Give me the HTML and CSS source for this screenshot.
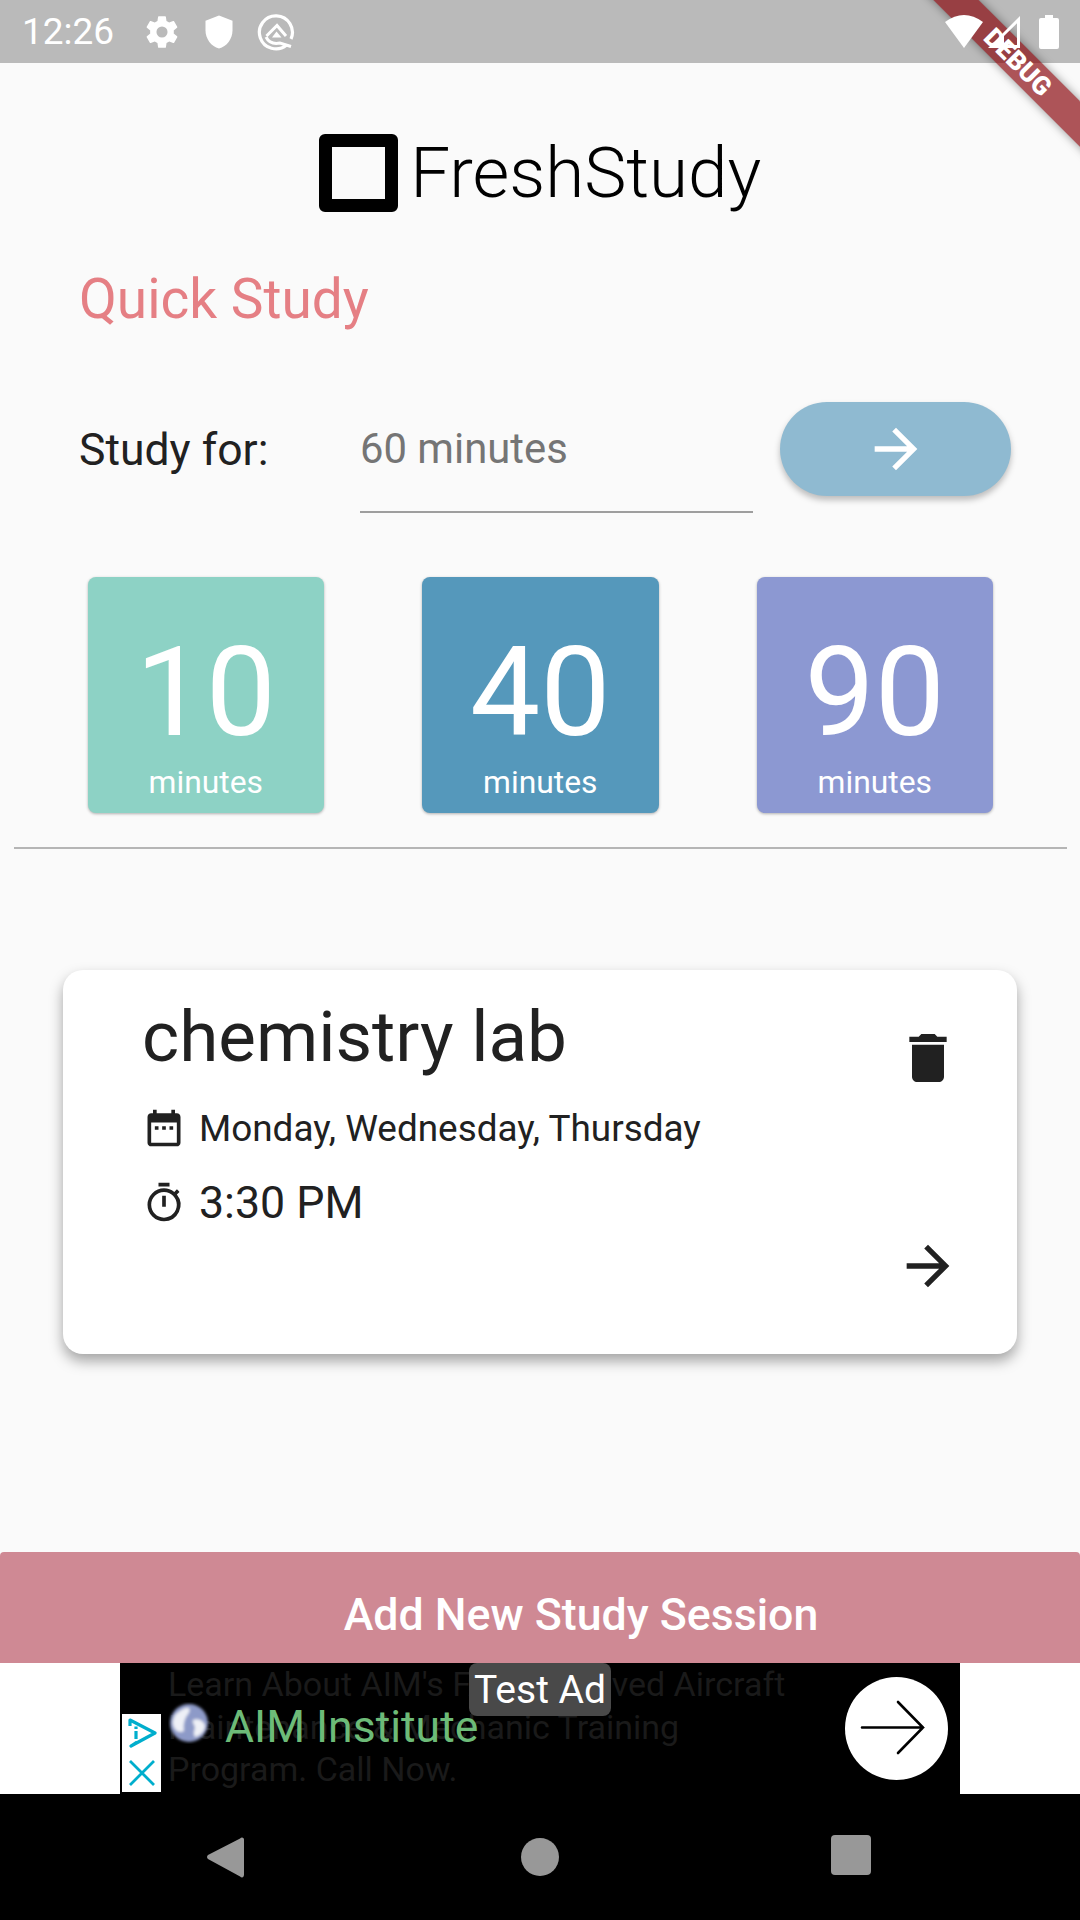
FILE: index.html
```html
<!DOCTYPE html>
<html lang="en">
<head>
<meta charset="utf-8">
<title>FreshStudy</title>
<link rel="stylesheet" href="styles.css">
</head>
<body>
<div class="screen">
  <header class="status">
    <span class="clock">12:26</span>
    <svg class="st-ic" viewBox="0 0 24 24"><path fill="#fff" d="M19.4 13c.04-.32.07-.65.07-1s-.03-.68-.07-1l2.1-1.650c.2-.15.25-.42.12-.64l-2-3.460c-.12-.22-.39-.3-.61-.22l-2.490 1c-.52-.4-1.080-.73-1.690-.98l-.38-2.650A.49.49 0 0 0 14 2h-4c-.25 0-.46.18-.49.42l-.38 2.650c-.61.25-1.170.59-1.690.98l-2.490-1c-.23-.09-.49 0-.61.22l-2 3.460c-.13.22-.07.49.12.64L4.570 11c-.04.32-.07.66-.07 1s.03.68.07 1l-2.110 1.650c-.19.15-.25.42-.12.64l2 3.460c.12.22.39.3.61.22l2.490-1c.52.4 1.080.73 1.690.98l.38 2.650c.03.24.24.42.49.42h4c.25 0 .46-.18.49-.42l.38-2.650c.61-.25 1.170-.59 1.690-.98l2.490 1c.23.09.49 0 .61-.22l2-3.460c.12-.22.07-.49-.12-.64L19.4 13zM12 15.500a3.500 3.500 0 1 1 0-7 3.500 3.500 0 0 1 0 7z"/></svg>
    <svg class="st-shield" viewBox="0 0 24 24"><path fill="#fff" d="M12 1 3 4.500V11c0 5.550 3.840 10.740 9 12 5.160-1.260 9-6.450 9-12V4.500z"/></svg>
    <svg class="st-q" viewBox="0 0 38 38"><path fill="none" stroke="#fff" stroke-width="3.200" d="M29.500 32A16.500 16.500 0 1 1 34 26"/><path fill="none" stroke="#fff" stroke-width="3" d="M9.500 23 20 12.500 29 23"/><path fill="none" stroke="#fff" stroke-width="3" d="M9 24c3 6 9 7 14 6l11 3.500"/><path fill="#fff" d="m19.500 18.500 5 6h-9.500z"/></svg>
    <span class="status-gap"></span>
    <svg class="st-wifi" viewBox="0 0 38 33"><path fill="#fff" d="M19 33 0 7Q19-7 38 7z"/></svg>
    <svg class="st-signal" viewBox="0 0 32 32"><path fill="#fff" fill-rule="evenodd" d="M32 0v32H0zM29 7.200 16 20v9h13z"/></svg>
    <svg class="st-batt" viewBox="0 0 20 34"><path fill="#fff" d="M6 0h8v3h4a2 2 0 0 1 2 2v27a2 2 0 0 1-2 2H2a2 2 0 0 1-2-2V5a2 2 0 0 1 2-2h4z"/></svg>
  </header>

  <main class="content">
    <div class="brand">
      <span class="logo"></span>
      <span class="brand-name">FreshStudy</span>
    </div>
    <h1 class="quick">Quick Study</h1>
    <div class="study-row">
      <span class="study-label">Study for:</span>
      <div class="study-input"><span class="placeholder">60 minutes</span></div>
      <button class="go">
        <svg class="go-ic" viewBox="0 0 24 24"><path fill="#fff" d="m12 4-1.410 1.410L16.170 11H4v2h12.170l-5.580 5.590L12 20l8-8z"/></svg>
      </button>
    </div>
    <div class="tiles">
      <div class="tile tile-teal"><span class="tile-num">10</span><span class="tile-unit">minutes</span></div>
      <div class="tile tile-blue"><span class="tile-num">40</span><span class="tile-unit">minutes</span></div>
      <div class="tile tile-violet"><span class="tile-num">90</span><span class="tile-unit">minutes</span></div>
    </div>
    <hr class="rule">
    <section class="card">
      <div class="card-main">
        <div class="card-title">chemistry lab</div>
        <div class="card-line card-days">
          <svg class="line-ic" viewBox="0 0 24 24"><path fill="#212121" d="M9 11H7v2h2v-2zm4 0h-2v2h2v-2zm4 0h-2v2h2v-2zm2-7h-1V2h-2v2H8V2H6v2H5c-1.110 0-1.990.9-1.990 2L3 20c0 1.100.89 2 2 2h14c1.100 0 2-.9 2-2V6c0-1.100-.9-2-2-2zm0 16H5V9h14v11z"/></svg>
          <span class="days">Monday, Wednesday, Thursday</span>
        </div>
        <div class="card-line card-time">
          <svg class="line-ic" viewBox="0 0 24 24"><path fill="#212121" d="M15 1H9v2h6V1zm-4 13h2V8h-2v6zm8.030-6.610 1.420-1.420c-.43-.51-.9-.99-1.410-1.410l-1.420 1.420A8.962 8.962 0 0 0 12 4a9 9 0 0 0-9 9 9 9 0 0 0 9 9 8.994 8.994 0 0 0 7.030-14.610zM12 20c-3.870 0-7-3.130-7-7s3.130-7 7-7 7 3.130 7 7-3.130 7-7 7z"/></svg>
          <span class="time">3:30 PM</span>
        </div>
      </div>
      <div class="card-actions">
        <svg class="act-ic" viewBox="0 0 24 24"><path fill="#212121" d="M6 19c0 1.100.9 2 2 2h8c1.100 0 2-.9 2-2V7H6v12zM19 4h-3.500l-1-1h-5l-1 1H5v2h14V4z"/></svg>
        <svg class="act-ic" viewBox="0 0 24 24"><path fill="#212121" d="m12 4-1.410 1.410L16.170 11H4v2h12.170l-5.580 5.590L12 20l8-8z"/></svg>
      </div>
    </section>
  </main>

  <button class="add">Add New Study Session</button>

  <aside class="ad-strip">
    <div class="ad">
      <span class="ad-copy">Learn About AIM's FAA Approved Aircraft<br>Maintenance &amp; Mechanic Training<br>Program. Call Now.</span>
      <div class="ad-choice">
        <svg class="ad-play" viewBox="0 0 30 30"><path fill="none" stroke="#00aecd" stroke-width="3.200" stroke-linejoin="round" d="M3 8V2l25 13L4 28l6-4"/><path fill="none" stroke="#00aecd" stroke-width="3.200" d="M9 13v8M9 8.500v2.500"/></svg>
        <svg class="ad-x" viewBox="0 0 26 26"><path fill="none" stroke="#00aecd" stroke-width="2.800" d="m1 1 24 24M25 1 1 25"/></svg>
      </div>
      <svg class="globe" viewBox="0 0 42 42"><defs><filter id="soft"><feGaussianBlur stdDeviation="1.400"/></filter></defs><g filter="url(#soft)"><circle cx="21" cy="21" r="19" fill="#8d9ac8"/><path fill="#eef0f6" d="M7 13c5-4 10-8 14-7 2 3-1 6-3 9-2 4-3 9-2 14-5 3-10-1-11-7-1-3 1-6 2-9zM25 18c5-2 11 1 12 6 0 5-5 10-10 11-2-3-1-6 0-9 0-3-3-5-2-8z"/></g></svg>
      <span class="ad-name">AIM Institute</span>
      <span class="ad-label">Test Ad</span>
      <svg class="ad-go" viewBox="0 0 103 103"><circle cx="51.500" cy="51.500" r="51.500" fill="#fff"/><path fill="none" stroke="#000" stroke-width="2.600" stroke-linecap="round" d="M17 50.500h61M53 25l25 25.500L53 76"/></svg>
    </div>
  </aside>

  <nav class="navbar">
    <svg class="nav-back" viewBox="0 0 38 44"><path fill="#989898" d="M36 2c1 0 2 1 2 2v36c0 2-1 3-2 3-.7 0-1.500-.4-2-1L1 24c-1.300-1.200-1.300-2.800 0-4L34 3c.5-.6 1.300-1 2-1z"/></svg>
    <span class="nav-home"></span>
    <span class="nav-recent"></span>
  </nav>

  <div class="debug"><span class="debug-band">DEBUG</span></div>
</div>
</body>
</html>
```
FILE: styles.css
```css
* { box-sizing: border-box; }
html, body { margin: 0; padding: 0; }
body { width: 1080px; height: 1920px; overflow: hidden; font-family: Roboto, "Liberation Sans", sans-serif; background: #fafafa; }
.screen { position: relative; width: 1080px; height: 1920px; display: flex; flex-direction: column; overflow: hidden; }

.status { height: 63px; background: #bababa; display: flex; align-items: center; padding: 0 21px 0 22px; flex: none; }
.clock { color: #fff; font-size: 37px; font-weight: 400; width: 121px; }
.st-ic { width: 38px; height: 38px; margin-right: 20px; }
.st-shield { width: 36px; height: 36px; margin-right: 20px; }
.st-q { width: 38px; height: 38px; }
.status-gap { flex: 1; }
.st-wifi { width: 38px; height: 33px; margin-right: 5px; position: relative; z-index: 2; }
.st-signal { width: 32px; height: 32px; margin-right: 19px; position: relative; z-index: 2; }
.st-batt { width: 20px; height: 34px; }

.content { flex: 1; display: flex; flex-direction: column; min-height: 0; }
.brand { display: flex; justify-content: center; align-items: center; gap: 12.500px; margin-top: 71px; height: 78px; }
.logo { width: 79px; height: 78px; border: 13px solid #000; border-radius: 6px; }
.brand-name { font-size: 71px; font-weight: 300; color: #000; line-height: 78px; }
.quick { margin: 57px 0 0 79px; font-size: 55px; font-weight: 400; line-height: 60px; color: #e57f84; }
.study-row { display: flex; margin-top: 73px; padding-left: 79px; height: 110px; }
.study-label { font-size: 44.500px; color: #212121; width: 281px; line-height: 96px; }
.study-input { width: 393px; height: 111px; border-bottom: 2px solid #9e9e9e; }
.placeholder { font-size: 41.800px; color: #757575; line-height: 94px; }
.go { width: 231px; height: 94px; margin-left: 27px; border: 0; border-radius: 47px; background: #8fbad1; box-shadow: 0 4px 6px rgba(0,0,0,.25); display: flex; align-items: center; justify-content: center; padding: 0; }
.go-ic { width: 64px; height: 64px; }

.tiles { display: flex; gap: 98px; margin-top: 65px; padding-left: 87.500px; }
.tile { width: 236.500px; height: 236px; border-radius: 8px; color: #fff; display: flex; flex-direction: column; align-items: center; box-shadow: 0 1px 3px rgba(0,0,0,.3); }
.tile-teal { background: #8dd2c5; }
.tile-blue { background: #5598bb; }
.tile-violet { background: #8c98d2; }
.tile-num { font-size: 125px; line-height: 132px; margin-top: 50px; font-weight: 400; }
.tile-unit { font-size: 31.800px; line-height: 34px; margin-top: 6px; }
.rule { margin: 34px 13px 0 14px; border: 0; height: 2px; background: #b5b5b5; flex: none; }

.card { margin: 121px 63px 0; height: 384px; background: #fff; border-radius: 20px; box-shadow: 0 7px 14px rgba(0,0,0,.35); display: flex; justify-content: space-between; padding: 0 57px 0 79px; }
.card-title { font-size: 71px; line-height: 80px; color: #212121; margin-top: 27px; }
.card-line { display: flex; align-items: center; gap: 13px; height: 44px; }
.card-days { margin-top: 29px; }
.card-time { margin-top: 31px; }
.line-ic { width: 44px; height: 44px; flex: none; }
.days { font-size: 36.900px; color: #212121; }
.time { font-size: 44.700px; color: #212121; }
.card-actions { display: flex; flex-direction: column; gap: 144px; padding-top: 56px; }
.act-ic { width: 64px; height: 64px; }

.add { flex: none; height: 111px; border: 0; background: #cf8994; color: #fff; font-family: Roboto, sans-serif; font-size: 44.700px; font-weight: 500; padding: 14px 0 0 82px; border-radius: 4px 4px 0 0; width: 1080px; }

.ad-strip { flex: none; height: 131px; background: #fff; display: flex; justify-content: center; }
.ad { position: relative; width: 840px; height: 131px; background: #000; overflow: hidden; }
.ad-copy { position: absolute; left: 48px; top: 0; font-size: 34px; line-height: 42.500px; color: #1a1a1a; white-space: nowrap; }
.ad-choice { position: absolute; left: 2px; top: 51px; width: 39px; height: 78px; background: #fff; display: flex; flex-direction: column; align-items: center; gap: 12px; padding-top: 4px; }
.ad-play { width: 30px; height: 30px; flex: none; }
.ad-x { width: 26px; height: 26px; flex: none; }
.globe { position: absolute; left: 48px; top: 39px; width: 42px; height: 42px; }
.ad-name { position: absolute; left: 105px; top: 38px; font-size: 44.500px; line-height: 52px; color: #6dbb78; }
.ad-label { position: absolute; left: 349px; top: 0; width: 142px; height: 53px; background: #494949; border-radius: 8px; color: #fff; font-size: 39px; line-height: 54px; text-align: center; }
.ad-go { position: absolute; left: 725px; top: 14px; width: 103px; height: 103px; }

.navbar { flex: none; height: 126px; background: #000; position: relative; }
.nav-back { position: absolute; left: 207px; top: 41px; width: 37px; height: 44px; }
.nav-home { position: absolute; left: 521px; top: 44px; width: 38px; height: 38px; border-radius: 50%; background: #989898; }
.nav-recent { position: absolute; left: 831px; top: 41px; width: 40px; height: 40px; border-radius: 4px; background: #989898; }

.debug { position: absolute; top: 0; right: 0; width: 160px; height: 200px; overflow: hidden; pointer-events: none; }
.debug-band { position: absolute; top: 46px; left: -32px; width: 260px; height: 32px; transform: rotate(45deg); background: rgba(135,5,10,.68); color: #fff; font-size: 26px; font-weight: 900; line-height: 32px; text-align: center; box-shadow: 0 0 10px rgba(0,0,0,.4); }
```
